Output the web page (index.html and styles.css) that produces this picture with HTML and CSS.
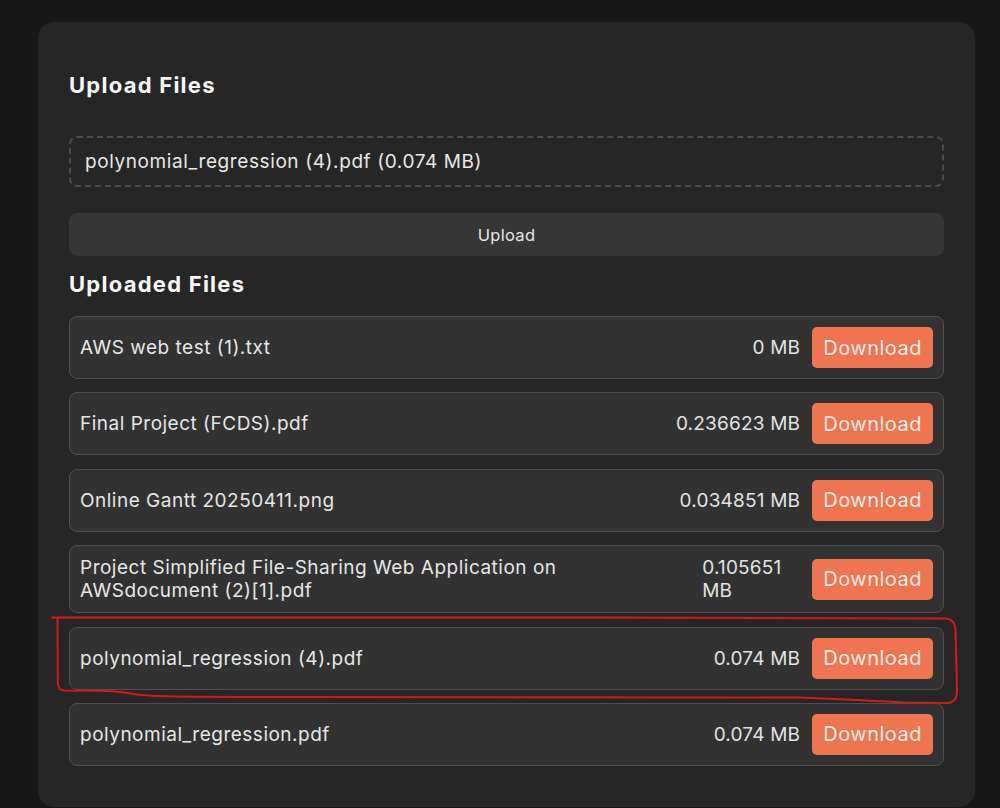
FILE: index.html
```html
<!DOCTYPE html>
<html lang="en">
<head>
<meta charset="utf-8">
<title>File Sharing</title>
<link rel="stylesheet" href="styles.css">
</head>
<body>
<main class="card">
  <h2 class="title">Upload Files</h2>
  <div class="dropzone">polynomial_regression (4).pdf (0.074 MB)</div>
  <button class="upload-btn">Upload</button>
  <h2 class="title title-list">Uploaded Files</h2>
  <ul class="files">
    <li class="file">
      <span class="name">AWS web test (1).txt</span>
      <span class="size">0 MB</span>
      <button class="dl">Download</button>
    </li>
    <li class="file">
      <span class="name">Final Project (FCDS).pdf</span>
      <span class="size">0.236623 MB</span>
      <button class="dl">Download</button>
    </li>
    <li class="file">
      <span class="name">Online Gantt 20250411.png</span>
      <span class="size">0.034851 MB</span>
      <button class="dl">Download</button>
    </li>
    <li class="file">
      <span class="name">Project Simplified File-Sharing Web Application on AWSdocument (2)[1].pdf</span>
      <span class="size">0.105651 MB</span>
      <button class="dl">Download</button>
    </li>
    <li class="file">
      <span class="name">polynomial_regression (4).pdf</span>
      <span class="size">0.074 MB</span>
      <button class="dl">Download</button>
    </li>
    <li class="file">
      <span class="name">polynomial_regression.pdf</span>
      <span class="size">0.074 MB</span>
      <button class="dl">Download</button>
    </li>
  </ul>
</main>
<svg class="annotation" width="1000" height="808" viewBox="0 0 1000 808" aria-hidden="true">
  <path d="M52 617.5 L600 617.5 L946 618.5 Q955 619.5 955.5 630 L957 690 Q957.5 703 946 703 L905 702.5 Q860 700 800 697.5 L300 697 Q230 697 175 696.5 Q140 696 125 692.5 Q110 690.5 95 690.8 L64 690.5 Q58 690 57.8 683 L57.5 619"
        fill="none" stroke="#d5191c" stroke-width="2" stroke-linecap="round" stroke-linejoin="round"/>
</svg>
</body>
</html>
```
FILE: styles.css
```css
* {
  box-sizing: border-box;
}

html, body {
  margin: 0;
  padding: 0;
}

body {
  background: #181818;
  font-family: Inter, "Open Sans", "DejaVu Sans", sans-serif;
  color: #e4e4e4;
  position: relative;
  overflow: hidden;
  height: 808px;
}

.card {
  width: 937px;
  margin: 22px 0 0 38px;
  padding: 49px 31px 41px;
  background: #262626;
  border-radius: 16px;
}

.title {
  margin: 0;
  font-size: 22px;
  line-height: 29px;
  font-weight: 700;
  letter-spacing: 1.25px;
  color: #f7f7f7;
}

.dropzone {
  margin-top: 36px;
  border: 2px dashed #4b4b4b;
  border-radius: 8px;
  padding: 12px 14px;
  font-size: 19px;
  line-height: 23px;
  letter-spacing: 0.6px;
  color: #e8e8e8;
}

.upload-btn {
  display: block;
  width: 100%;
  height: 43px;
  margin-top: 26px;
  border: 0;
  border-radius: 8px;
  background: #363636;
  color: #e6e6e6;
  font-family: inherit;
  font-size: 16.5px;
  letter-spacing: 0.3px;
}

.title-list {
  margin-top: 13.5px;
}

.files {
  list-style: none;
  margin: 17.5px 0 0;
  padding: 0;
  display: flex;
  flex-direction: column;
  gap: 13.4px;
}

.file {
  display: flex;
  align-items: center;
  gap: 12px;
  padding: 10px;
  border: 1px solid #4f4f4f;
  border-radius: 8px;
  background: #323232;
  font-size: 19px;
  line-height: 23px;
  letter-spacing: 0.5px;
}

.name {
  flex: 1 1 auto;
  color: #e6e6e6;
}

.size {
  flex: 0 1 auto;
  color: #e2e2e2;
  letter-spacing: 0.2px;
}

.dl {
  flex: 0 0 auto;
  height: 41px;
  padding: 0 11px;
  border: 0;
  border-radius: 5px;
  background: #ee7550;
  color: #f8ece6;
  font-family: inherit;
  font-size: 20px;
  letter-spacing: 0.5px;
}

.annotation {
  position: absolute;
  top: 0;
  left: 0;
  pointer-events: none;
}
```
